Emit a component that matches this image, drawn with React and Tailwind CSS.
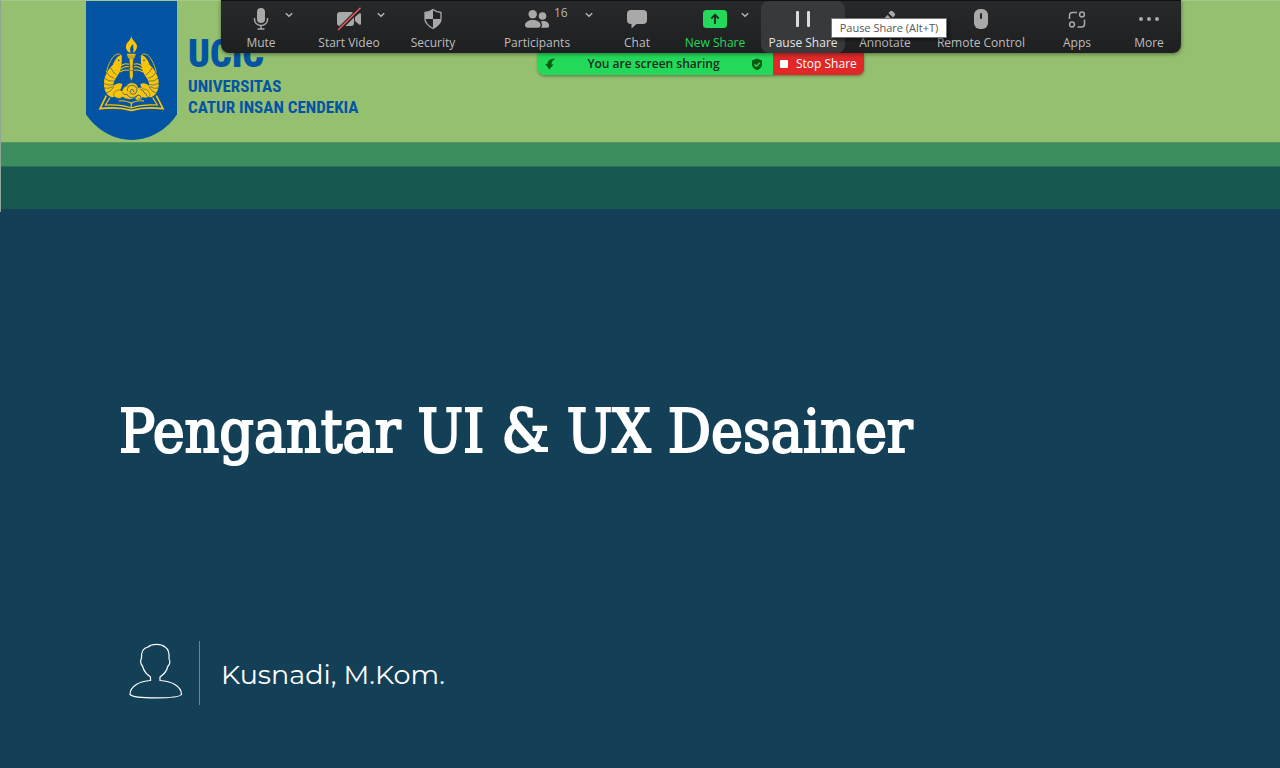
import React from "react";

const ICON = "fill-[#a9a9aa]";

function MicIcon() {
  return (
    <svg viewBox="0 0 16 24" className="h-6 w-4" aria-hidden="true">
      <rect x="4" y="1" width="8" height="15" rx="4" className={ICON} />
      <path d="M1.500 11v1.500a6.500 6 0 0 0 13 0V11M8 18.500v3M4.500 22h7" fill="none" stroke="#a9a9aa" strokeWidth="1.500" />
    </svg>
  );
}

function VideoIcon() {
  return (
    <svg viewBox="0 0 26 24" className="h-6 w-[26px]" aria-hidden="true">
      <rect x="1" y="5" width="17" height="14" rx="3" className={ICON} />
      <path d="M19 10l4-3.500q2-1 2 .8v9.400q0 1.800-2 .8l-4-3.500z" className={ICON} />
      <path d="M2 23.500L24.500 1" stroke="#232426" strokeWidth="4" />
      <path d="M2 23L24.500 .8" stroke="#e8575a" strokeWidth="1.600" />
    </svg>
  );
}

function SecurityIcon() {
  return (
    <svg viewBox="0 0 20 24" className="h-6 w-5" aria-hidden="true">
      <path d="M10 2.500C12.500 4.500 15 5.300 18 5.500v6.500c0 4.500-4 7.300-8 9.500-4-2.200-8-5-8-9.500V5.500c3-.2 5.500-1 8-3z" fill="#232426" stroke="#a9a9aa" strokeWidth="1.300" />
      <path d="M10 2.500V12H2V5.500c3-.2 5.500-1 8-3zM10 12h8c0 4.500-4 7.300-8 9.500z" className={ICON} />
    </svg>
  );
}

function PeopleIcon() {
  return (
    <svg viewBox="0 0 26 24" className="h-6 w-[26px]" aria-hidden="true">
      <circle cx="18.500" cy="9" r="3.800" className={ICON} />
      <path d="M17 20.700h6q2.200 0 2.200-2c0-3-2.700-4.700-6-4.700q-1.500 0-2.700.4c1.800 1.600 2 4.200 .5 6.300z" className={ICON} />
      <circle cx="8.700" cy="7.200" r="4.200" className={ICON} />
      <path d="M1 18.300c0-3.300 3.600-5.300 7.800-5.300s7.800 2 7.800 5.300q0 2.400-2.400 2.400H3.400q-2.400 0-2.400-2.400z" className={ICON} />
    </svg>
  );
}

function ChatIcon() {
  return (
    <svg viewBox="0 0 22 24" className="h-6 w-[22px]" aria-hidden="true">
      <path d="M5 3h12q4 0 4 4v6q0 4-4 4h-6.500L5.500 21.500V17H5q-4 0-4-4V7q0-4 4-4z" className={ICON} />
    </svg>
  );
}

function NewShareIcon() {
  return (
    <svg viewBox="0 0 24 24" className="h-6 w-6" aria-hidden="true">
      <rect x="0" y="3" width="24" height="18" rx="3.500" fill="#23d959" />
      <path d="M12 17V8.500M8.300 11.500L12 7.800l3.700 3.700" fill="none" stroke="#1c2b20" strokeWidth="1.800" />
    </svg>
  );
}

function PauseIcon() {
  return (
    <svg viewBox="0 0 16 24" className="h-6 w-4" aria-hidden="true">
      <rect x="1" y="4" width="3" height="16" rx="1" fill="#dcdcdc" />
      <rect x="12" y="4" width="3" height="16" rx="1" fill="#dcdcdc" />
    </svg>
  );
}

function PencilIcon() {
  return (
    <svg viewBox="0 0 24 24" className="h-6 w-6" aria-hidden="true">
      <path d="M6 21l1.500-5.500L14.500 8l4.500 4.500-7.500 7z" className={ICON} />
      <path d="M15.500 6l1.600-1.700q1.200-1.200 2.500 0l2 2q1.200 1.300 0 2.500L20 10.500z" className={ICON} />
    </svg>
  );
}

function MouseIcon() {
  return (
    <svg viewBox="0 0 16 24" className="h-6 w-4" aria-hidden="true">
      <rect x="1" y="2" width="14" height="20" rx="6" className={ICON} />
      <rect x="7" y="6" width="2" height="6" rx="1" fill="#232426" />
    </svg>
  );
}

function AppsIcon() {
  return (
    <svg viewBox="0 0 18 24" className="h-6 w-[18px]" fill="none" stroke="#a9a9aa" strokeWidth="1.500" aria-hidden="true">
      <path d="M1.500 12V8.500q0-3 3-3H9M16.500 12.500V17q0 3-3 3H9.500" />
      <circle cx="14" cy="7.500" r="2.400" />
      <circle cx="4" cy="17.500" r="2.400" />
    </svg>
  );
}

function MoreIcon() {
  return (
    <svg viewBox="0 0 22 24" className="h-6 w-[22px]" aria-hidden="true">
      <circle cx="3" cy="12" r="2" className={ICON} />
      <circle cx="11" cy="12" r="2" className={ICON} />
      <circle cx="19" cy="12" r="2" className={ICON} />
    </svg>
  );
}

function Caret({ label, place }) {
  return (
    <button type="button" aria-label={label} className={"absolute top-2 flex h-3 w-3 items-center justify-center " + place}>
      <svg viewBox="0 0 8 6" className="h-[6px] w-2" fill="none" stroke="#b5b5b6" strokeWidth="1.500" aria-hidden="true">
        <path d="M.8 1.200L4 4.300l3.200-3.100" />
      </svg>
    </button>
  );
}

const items = [
  { label: "Mute", icon: MicIcon, width: "w-20", caret: "left-[62px]" },
  { label: "Start Video", icon: VideoIcon, width: "w-24", caret: "left-[74px]" },
  { label: "Security", icon: SecurityIcon, width: "w-[72px]" },
  { label: "Participants", icon: PeopleIcon, width: "w-[136px]", caret: "left-[114px]", count: "16" },
  { label: "Chat", icon: ChatIcon, width: "w-16" },
  { label: "New Share", icon: NewShareIcon, width: "w-[92px]", caret: "left-[70px]", tone: "text-[#23d959]" },
  { label: "Pause Share", icon: PauseIcon, width: "w-[84px]", tone: "rounded-lg bg-[#38393b] text-[#e4e4e4]", tip: "Pause Share (Alt+T)" },
  { label: "Annotate", icon: PencilIcon, width: "w-20" },
  { label: "Remote Control", icon: MouseIcon, width: "w-28" },
  { label: "Apps", icon: AppsIcon, width: "w-20" },
  { label: "More", icon: MoreIcon, width: "w-16" },
];

function ToolbarItem({ item }) {
  const Icon = item.icon;
  return (
    <div className={"relative shrink-0 " + item.width}>
      <button type="button" className={"flex h-[52px] w-full flex-col items-center pt-[6px] " + (item.tone || "text-[#bdbdbe]")}>
        <Icon />
        <span className="whitespace-nowrap pt-[2px] text-[12px] leading-5">{item.label}</span>
      </button>
      {item.count && <span className="absolute left-[85px] top-1 text-[12px] leading-4 text-[#b5b5b6]">{item.count}</span>}
      {item.caret && <Caret label={item.label + " options"} place={item.caret} />}
      {item.tip && (
        <span role="tooltip" className="absolute left-[70px] top-[17px] z-10 flex h-5 w-[116px] items-center justify-center whitespace-nowrap border border-[#767676] bg-white text-[11px] text-[#575757] shadow-[2px_2px_3px_rgba(0,0,0,0.5)]">
          {item.tip}
        </span>
      )}
    </div>
  );
}

function ShareControls() {
  return (
    <div className="absolute left-[221px] top-0 flex flex-col items-center font-['Open_Sans','Noto_Sans',sans-serif]">
      <nav aria-label="Meeting controls" className="relative z-10 flex rounded-b-lg border-t border-[#101112] bg-linear-to-b from-[#28292b] to-[#1e1f21] shadow-[0_1px_4px_rgba(0,0,0,0.45)]">
        {items.map((item) => (
          <ToolbarItem key={item.label} item={item} />
        ))}
      </nav>
      <div className="flex h-[22px] overflow-hidden rounded-b-md text-[12px] shadow-[0_1px_3px_rgba(0,0,0,0.4)]">
        <div className="flex w-[235px] items-center justify-between bg-[#23d959] pl-[7px] pr-[10px] font-semibold text-[#1d2b22]">
          <svg viewBox="0 0 11 12" className="h-3 w-[11px]" aria-hidden="true">
            <path d="M10.500.8C5.500.6 2.600 2.500 2.300 6H.3l4 5.500L8.600 6.500H6.600C6.600 3.800 7.800 2 10.500.8z" fill="#0b5a12" />
          </svg>
          <span>You are screen sharing</span>
          <svg viewBox="0 0 12 14" className="h-[14px] w-3" aria-hidden="true">
            <path d="M6 1.500l5 2V7.500C11 10.500 8.500 12 6 13.300 3.500 12 1 10.500 1 7.500v-4z" fill="#0b5a12" />
            <path d="M3.500 7.300l2 2 3.200-3.500" fill="none" stroke="#23d959" strokeWidth="1.300" />
          </svg>
        </div>
        <button type="button" className="flex w-[91px] items-center gap-2 bg-[#e02828] pb-px pl-[7px] font-medium text-white">
          <span className="h-2 w-2 rounded-[1px] bg-white" />
          Stop Share
        </button>
      </div>
    </div>
  );
}

function Prawn() {
  return (
    <g>
      <path d="M152 166C143 168 134 180 129 194 121 201 108 216 103 238 99 260 105 284 123 291 133 294 140 286 139 279 148 276 155 265 157 252 148 247 138 250 131 257 128 243 142 230 149 216 155 200 157 180 154 166z" fill="#fcc404" />
      <path d="M109 218C113 198 128 158 148 162q6 2 7 10" fill="none" stroke="#fcc404" strokeWidth="2.500" />
      <path d="M150 199q12-12 27-6M151 208q14-12 26-7M149 216q14-9 28-5" fill="none" stroke="#fcc404" strokeWidth="3.200" />
      <path d="M122 203q5 13 18 22M110 217q6 14 23 18M103 234q12 12 28 9M101 250q14 8 30 4M102 264q14 4 28-5M108 279q14-2 23-18" fill="none" stroke="#0454a4" strokeWidth="1.800" />
      <circle cx="146" cy="181" r="2.500" fill="#0454a4" />
    </g>
  );
}

function Crest() {
  return (
    <svg viewBox="48 3 273 417" className="h-[139px] w-[91px] shrink-0" role="img" aria-label="Crest">
      <path d="M48 3h273v340C296 383 246 420 185 420S74 383 48 343z" fill="#0454a4" />
      <path d="M109 287L90 326q51-7 94 5 43-12 95-5L259 287" fill="none" stroke="#fcc404" strokeWidth="5" />
      <path d="M120 293l-14 22q45-3 78 9 33-12 78-9l-14-22M184 307v17M146 303q24-3 38 7 14-10 38-7" fill="none" stroke="#fcc404" strokeWidth="3.500" />
      <Prawn />
      <g transform="matrix(-1 0 0 1 368 0)">
        <Prawn />
      </g>
      <path d="M135 292q-9-10 2-19 9-8 19 0 3-13 14-15 6-12 20-9 12 2 15 15 10-5 16 3 13-1 15 9 9 6 0 15-11 5-19 1-2 10-12 10-9-1-10-9-20 11-37-2-10 9-23 1z" fill="#fcc404" stroke="#0454a4" strokeWidth="1.500" />
      <path d="M184 107C185 122 202 127 201 140 200 149 195 156 188 158 194 148 188 145 190 133 180 139 179 148 182 158 173 157 167 148 168 138 169 126 183 121 184 107z" fill="#fcc404" />
      <path d="M171 161h26v5l-3 7-4 4-2 28h3l-2 5v20l-5 13-5-13v-20l-2-5h3l-2-28-4-4-3-7z" fill="#fcc404" stroke="#0454a4" strokeWidth="1" />
      <path d="M172 168h24M175 174h18M179 211h10" stroke="#0454a4" strokeWidth="1.500" />
      <path d="M172 273q-1-17 15-17 14 2 14 15-2 12-13 12-9-2-8-10 3-6 9-4 4 3 1 7M171 283q6 12 20 9 9-1 15-8M197 294q0-8 9-9 8 2 7 9-4 5-8 2M211 268q9 1 11 10 8 3 9 11M157 277q5 8 15 7" fill="none" stroke="#0454a4" strokeWidth="2.200" />
    </svg>
  );
}

export default function App() {
  return (
    <div className="relative flex min-h-screen flex-col overflow-hidden bg-[#134057]">
      <header>
        <div className="flex h-[142px] gap-[11px] border-t border-[#a4c888] bg-[#95c070] pl-[86px] text-[#0454a4]">
          <Crest />
          <div className="whitespace-nowrap pt-[33px] font-['Roboto_Condensed','Liberation_Sans_Narrow','Liberation_Sans',sans-serif] font-bold">
            <p className="text-[38px] font-black leading-10">UCIC</p>
            <p className="pt-[2px] text-[17px] leading-5">UNIVERSITAS</p>
            <p className="text-[17px] leading-[22px]">CATUR INSAN CENDEKIA</p>
          </div>
        </div>
        <div className="h-6 border-t border-[#53985f] bg-[#3c8d60]" />
        <div className="h-[43px] border-t border-[#277060] bg-[#185850]" />
      </header>
      <div className="absolute left-0 top-0 h-[212px] w-px bg-[#8fa596]" />

      <main className="flex flex-1 flex-col justify-between px-[119px] pb-[63px] pt-[182px] text-white">
        <h1 className="whitespace-nowrap font-['Roboto_Slab','DejaVu_Serif_Condensed','DejaVu_Serif',serif] text-[60px] font-medium leading-[80px] [-webkit-text-stroke:2px_white]">Pengantar UI &amp; UX Desainer</h1>
        <div className="flex h-16 items-center">
          <svg viewBox="0 0 54 56" className="mb-1 ml-[10px] h-14 w-[54px]" fill="none" stroke="white" strokeWidth="1.200" aria-hidden="true">
            <path d="M21.500 37.500V34C17 31 14.500 27 13.500 23 11.500 21 11 17 12.500 15.500 12 9 14 5 19 4 23 .5 32 .5 36 4 40 6.500 40.500 11 40 16 41.500 18 41 21.500 39 23 38 27 35.500 31 31 34v3.500C42 38 52.500 43 52.500 51.500 49 56 5 56 1 51.500 1 43 11 38 21.500 37.500z" />
          </svg>
          <span className="ml-4 h-16 w-px bg-[#6d8494]" />
          <p className="ml-[21px] pt-1 font-['Montserrat','Inter',sans-serif] text-[27px] leading-9">Kusnadi, M.Kom.</p>
        </div>
      </main>

      <ShareControls />
    </div>
  );
}
